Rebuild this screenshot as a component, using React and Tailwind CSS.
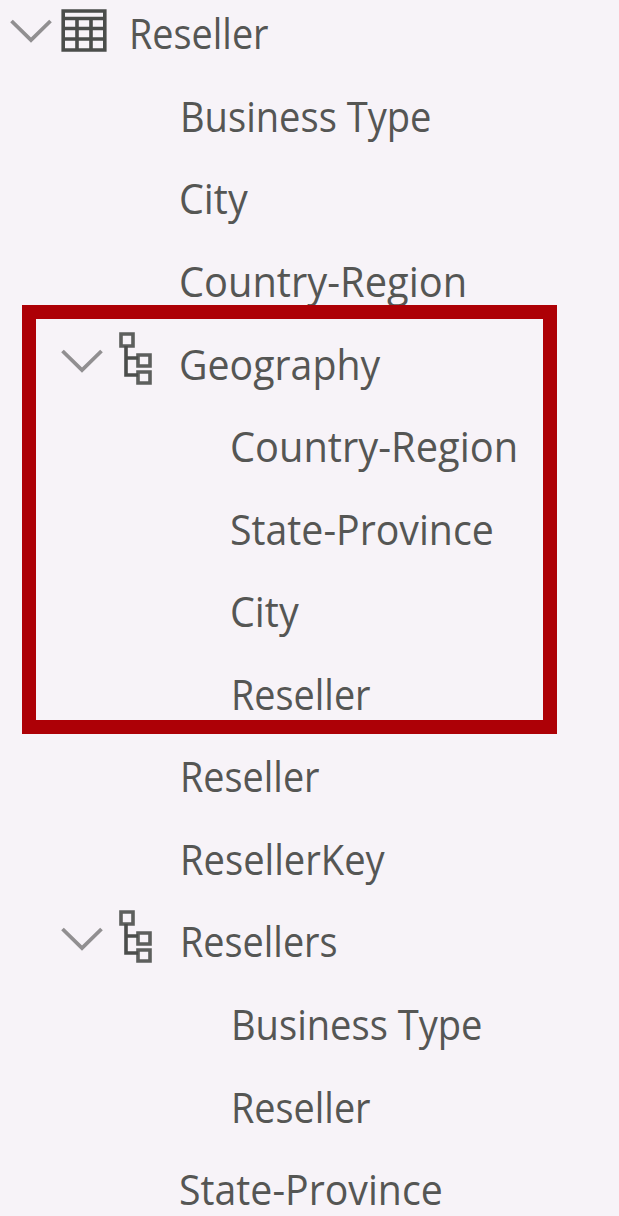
import React from "react";

function Chevron() {
  return (
    <svg className="h-6 w-[42px] shrink-0" viewBox="0 0 42 24" fill="none" stroke="#918f91" strokeWidth="3.8">
      <path d="M1.5 2 L21 21 L40.5 2" />
    </svg>
  );
}

function TableIcon() {
  return (
    <svg className="h-[43px] w-[46px] shrink-0" viewBox="0 0 46 43" fill="none" stroke="#4b4d4b" strokeWidth="3.6">
      <path d="M2.2 2 H43.8 V41 H2.2 Z" />
      <path d="M2 9.5 H44 M2 19.5 H44 M2 30 H44 M16 9.5 V41 M30 9.5 V41" />
    </svg>
  );
}

function HierarchyIcon() {
  return (
    <svg className="h-[53px] w-[33px] shrink-0" viewBox="0 0 33 53" fill="none" stroke="#5d5f5d" strokeWidth="3.6">
      <path d="M2 2 H14 V14 H2 Z M19 23 H31 V34 H19 Z M19 40 H31 V51 H19 Z" />
      <path d="M7 14 V43 H19 M7 26 H19" stroke="#4b4d4b" />
    </svg>
  );
}

function Label({ children, fit }) {
  return (
    <span className={`origin-left whitespace-nowrap font-['Open_Sans',sans-serif] text-[42px] leading-[60px] text-[#555654] ${fit}`}>
      {children}
    </span>
  );
}

function Row({ indent, icon, children, fit }) {
  return (
    <div className="flex h-[82.57px] items-center">
      <div className={`flex shrink-0 ${indent}`}>{icon}</div>
      <Label fit={fit}>{children}</Label>
    </div>
  );
}

const rootIcon = (
  <div className="flex h-[60px] items-center pl-[10px]">
    <div className="-mt-[5px]"><Chevron /></div>
    <div className="-mt-[5px] ml-[9px]"><TableIcon /></div>
  </div>
);

const groupIcon = (
  <div className="flex h-[60px] items-center pl-[61px]">
    <div className="-mt-[5px]"><Chevron /></div>
    <div className="-mt-2.5 ml-[16px]"><HierarchyIcon /></div>
  </div>
);

export default function App() {
  return (
    <main className="h-[1216px] w-[619px] overflow-hidden bg-[#f7f3f8]">
      <div className="-mt-[8px] flex flex-col">
        <Row indent="w-[128.5px]" icon={rootIcon} fit="scale-x-[0.9]">Reseller</Row>
        <Row indent="w-[179.5px]" fit="scale-x-[0.907]">Business Type</Row>
        <Row indent="w-[179px]" fit="scale-x-[0.94]">City</Row>
        <Row indent="w-[179px]" fit="scale-x-[0.948]">Country-Region</Row>
        <section className="relative">
          <div className="pointer-events-none absolute -top-[17px] left-[22px] h-[429px] w-[535px] border-[14px] border-[#ad0006]" />
          <Row indent="w-[179px]" icon={groupIcon} fit="scale-x-[0.935]">Geography</Row>
          <Row indent="w-[230px]" fit="scale-x-[0.948]">Country-Region</Row>
          <Row indent="w-[230px]" fit="scale-x-[0.935]">State-Province</Row>
          <Row indent="w-[230px]" fit="scale-x-[0.94]">City</Row>
          <Row indent="w-[230.5px]" fit="scale-x-[0.9]">Reseller</Row>
        </section>
        <Row indent="w-[179.5px]" fit="scale-x-[0.9]">Reseller</Row>
        <Row indent="w-[179.5px]" fit="scale-x-[0.908]">ResellerKey</Row>
        <Row indent="w-[179.5px]" icon={groupIcon} fit="scale-x-[0.9]">Resellers</Row>
        <Row indent="w-[230.5px]" fit="scale-x-[0.907]">Business Type</Row>
        <Row indent="w-[230.5px]" fit="scale-x-[0.9]">Reseller</Row>
        <Row indent="w-[179px]" fit="scale-x-[0.935]">State-Province</Row>
      </div>
    </main>
  );
}
